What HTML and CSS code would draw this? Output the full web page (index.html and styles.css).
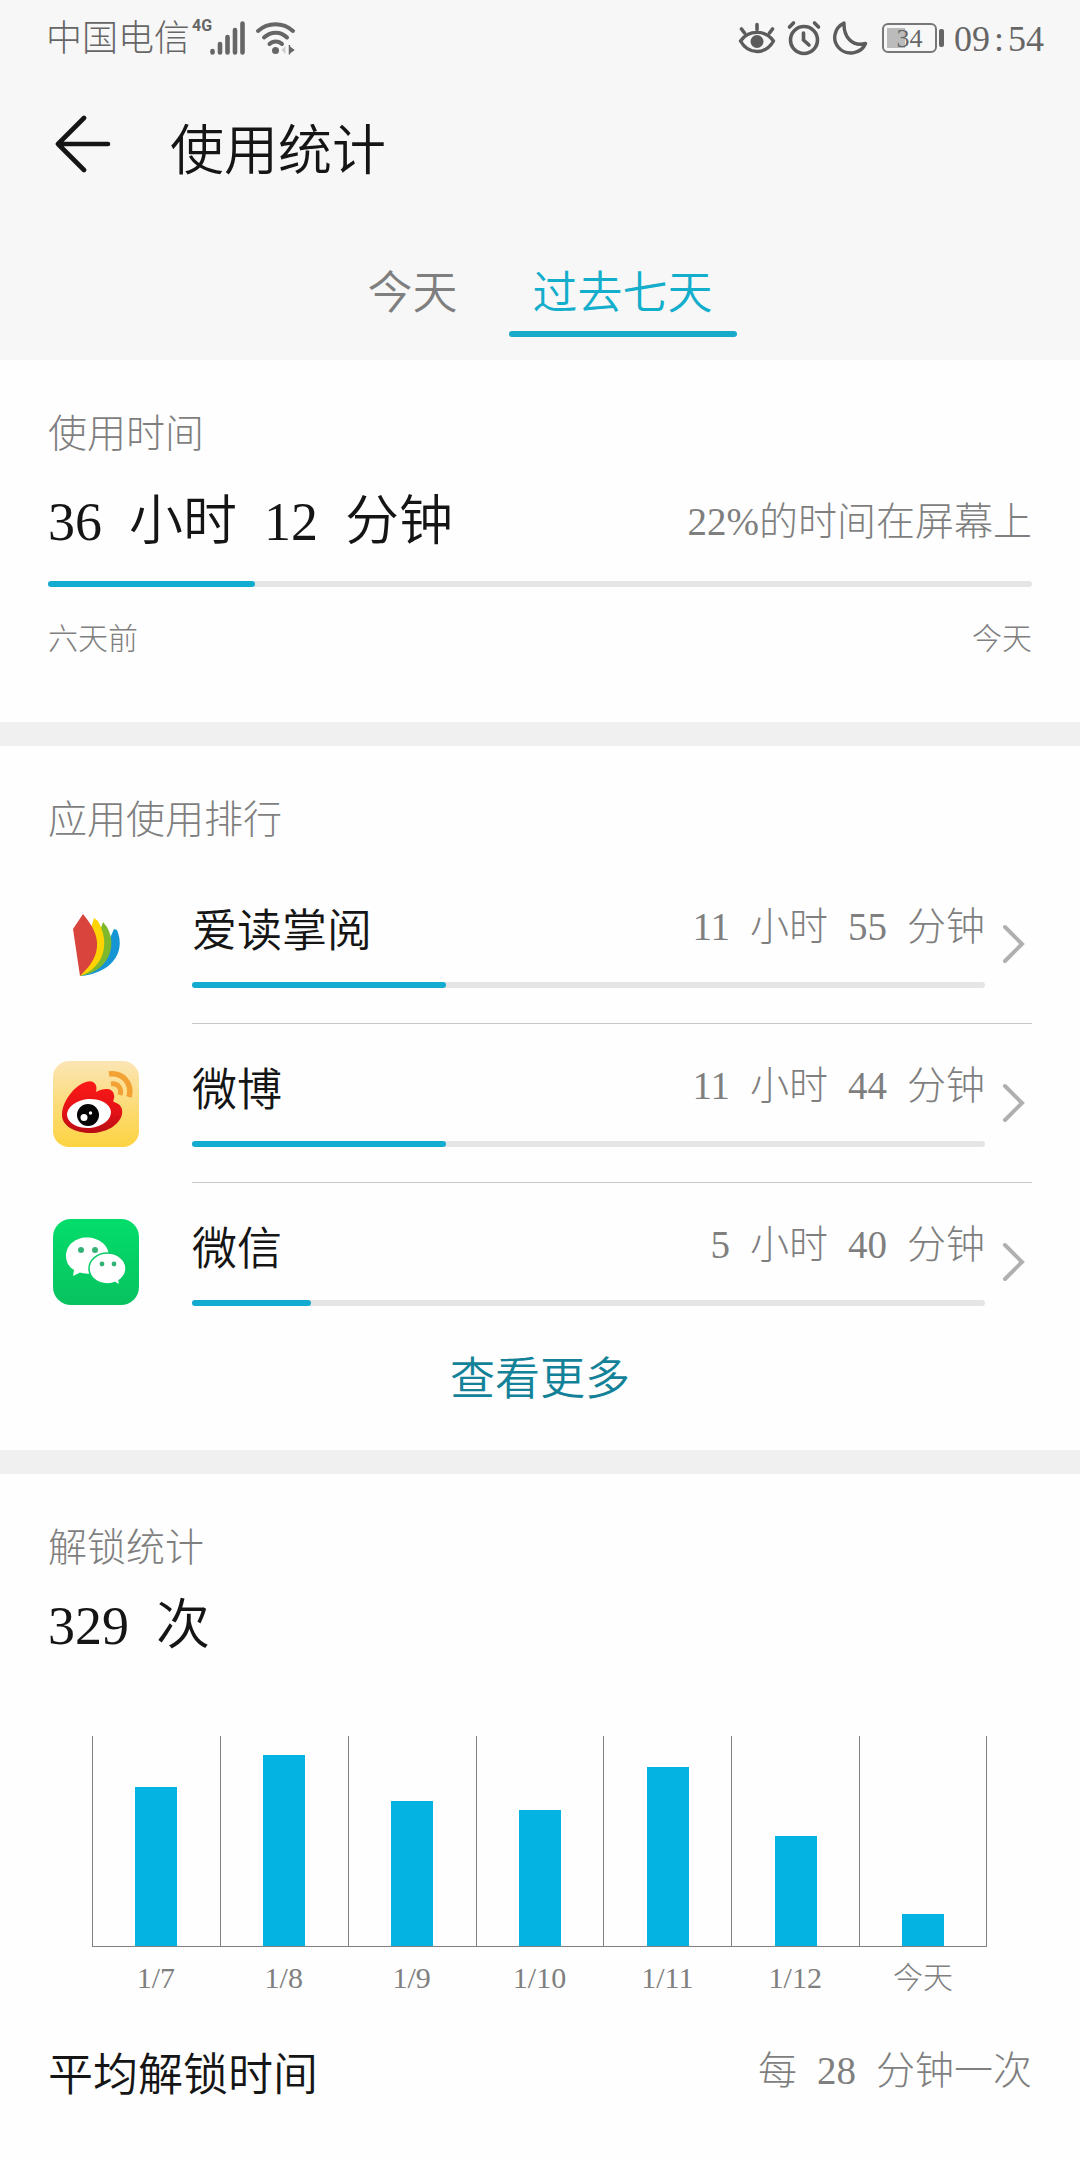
FILE: index.html
```html
<!DOCTYPE html>
<html lang="zh-CN">
<head>
<meta charset="utf-8">
<meta name="viewport" content="width=device-width, initial-scale=1">
<title>使用统计</title>
<link rel="stylesheet" href="styles.css">
</head>
<body>
<header class="top">
  <div class="status">
    <div class="status-left">
      <span class="carrier">中国电信</span>
      <span class="network">4G</span>
      <svg class="signal" width="36" height="34" viewBox="0 0 36 34" aria-hidden="true">
        <g stroke="#666" stroke-width="4.6" stroke-linecap="round"><path d="M2.5 30v1.5M10 23v8.5M17.500 16v15.500M25 9v22.500M32.500 2.500v29"/></g>
      </svg>
      <svg class="wifi" width="42" height="34" viewBox="0 0 42 34" aria-hidden="true">
        <g fill="none" stroke="#666" stroke-width="4" stroke-linecap="round"><path d="M3 10C13 1 28 1 38 10M9 16.500C16 10 25.500 10 32 16.500M14.500 23C18 19.500 23.500 19.500 27 23"/></g>
        <circle cx="20.500" cy="29.500" r="3.500" fill="#666"/>
        <path d="M34.500 24v9.500M34.500 26l4 3-4 3" fill="#666" stroke="#666" stroke-width="1.500"/>
        <path d="M30.500 25v8l-4-4z" fill="#ccc"/>
      </svg>
    </div>
    <div class="status-right">
      <svg width="38" height="34" viewBox="0 0 38 34" aria-hidden="true">
        <path d="M2.500 20C10.500 8.500 27.500 8.500 35.500 20C27.500 34 10.500 34 2.500 20Z" fill="none" stroke="#5c5c5c" stroke-width="3.400" stroke-linejoin="round"/>
        <circle cx="19" cy="20.500" r="6.500" fill="#5c5c5c"/>
        <path d="M19 3.500v5M3.500 8l3 4M34.500 8l-3 4" stroke="#5c5c5c" stroke-width="3.600" stroke-linecap="round"/>
      </svg>
      <svg width="36" height="36" viewBox="0 0 36 36" aria-hidden="true">
        <g fill="none" stroke="#5c5c5c" stroke-width="3.600" stroke-linecap="round"><circle cx="18" cy="20" r="13.500"/><path d="M17.500 13v7l5.500 5M3.500 7l4-4M32.500 7l-4-4"/></g>
      </svg>
      <svg width="36" height="36" viewBox="0 0 36 36" aria-hidden="true">
        <path d="M12 3C2 8 0 20 6.500 27.500C14 36 29 34.500 33.500 23.500C20 27 11.500 17 12 3Z" fill="none" stroke="#5c5c5c" stroke-width="3.400" stroke-linejoin="round"/>
      </svg>
      <div class="battery">
        <span class="battery-level">34</span>
        <span class="battery-cap"></span>
      </div>
      <time class="clock"><span>09</span><span class="colon">:</span><span>54</span></time>
    </div>
  </div>
  <div class="title-bar">
    <button class="back" type="button" aria-label="返回">
      <svg width="58" height="58" viewBox="0 0 58 58" aria-hidden="true"><path d="M30 3L4 29l26 26M4 29h50" fill="none" stroke="#151515" stroke-width="4.600" stroke-linecap="round" stroke-linejoin="round"/></svg>
    </button>
    <h1 class="title">使用统计</h1>
  </div>
  <div class="tabs" role="tablist">
    <button class="tab" type="button" role="tab" aria-selected="false">今天</button>
    <button class="tab" type="button" role="tab" aria-selected="true">过去七天</button>
  </div>
</header>
<main>
  <section class="card">
    <h2 class="label">使用时间</h2>
    <div class="summary">
      <p class="value"><span>36</span> <span>小时</span> <span>12</span> <span>分钟</span></p>
      <p class="note">22%的时间在屏幕上</p>
    </div>
    <div class="track"><div class="fill" style="width:21%"></div></div>
    <div class="ends"><span>六天前</span><span>今天</span></div>
  </section>

  <section class="card">
    <h2 class="label">应用使用排行</h2>
    <ul class="apps">
      <li><a class="app" href="#ireader">
        <svg class="app-icon" viewBox="0 0 86 86" aria-hidden="true">
          <path d="M61 27L64 28C74 52 56 72 27 74L50 52Z" fill="#1595d3"/>
          <path d="M50 20L54 25C65 44 55 70 27 74L40 50Z" fill="#7eb82c"/>
          <path d="M41 16L45 19C58 42 50 66 27 74L34 40Z" fill="#ffd400"/>
          <path d="M30 12C40 24 45 34 44 45C43 58 34 67 27 74L20 27Z" fill="#d9453c"/>
        </svg>
        <div class="app-body">
          <div class="app-main">
            <div class="app-head"><span class="app-name">爱读掌阅</span><span class="app-time"><span>11</span> <span>小时</span> <span>55</span> <span>分钟</span></span></div>
            <div class="track"><div class="fill" style="width:32%"></div></div>
          </div>
          <svg class="chevron" viewBox="0 0 26 42" aria-hidden="true"><path d="M4 4l17 17L4 38"/></svg>
        </div>
      </a></li>
      <li><a class="app" href="#weibo">
        <svg class="app-icon" viewBox="0 0 86 86" aria-hidden="true">
          <defs><linearGradient id="wb" x1="0" y1="0" x2="0" y2="1"><stop offset="0" stop-color="#fbe5b4"/><stop offset="1" stop-color="#fdd340"/></linearGradient>
          <linearGradient id="wr" x1="0" y1="0" x2="0" y2="1"><stop offset="0" stop-color="#fb1a16"/><stop offset=".6" stop-color="#e31117"/><stop offset="1" stop-color="#b80d14"/></linearGradient></defs>
          <rect width="86" height="86" rx="16" fill="url(#wb)"/>
          <path d="M9 54C9 40 22 24 33 21C41 18 45 24 43 31C50 27 60 26 61 34C62 38 59 40 61 41C68 43 70 48 69 53C67 64 53 72 38 72C22 72 9 65 9 54Z" fill="url(#wr)"/>
          <ellipse cx="36" cy="52.500" rx="22" ry="14.500" transform="rotate(-5 36 52.500)" fill="#fff"/>
          <circle cx="35" cy="54" r="11" fill="#050505"/>
          <circle cx="31" cy="56.500" r="3.500" fill="#fff"/><circle cx="37.500" cy="52" r="1.700" fill="#fff"/>
          <g fill="none" stroke="#f2a132"><path d="M56 13C69 11 80 22 76 36" stroke-width="5.500"/><path d="M58 23C65 22 69 27 67 34" stroke-width="5"/></g>
        </svg>
        <div class="app-body">
          <div class="app-main">
            <div class="app-head"><span class="app-name">微博</span><span class="app-time"><span>11</span> <span>小时</span> <span>44</span> <span>分钟</span></span></div>
            <div class="track"><div class="fill" style="width:32%"></div></div>
          </div>
          <svg class="chevron" viewBox="0 0 26 42" aria-hidden="true"><path d="M4 4l17 17L4 38"/></svg>
        </div>
      </a></li>
      <li><a class="app" href="#wechat">
        <svg class="app-icon" viewBox="0 0 86 86" aria-hidden="true">
          <defs><linearGradient id="wc" x1="0" y1="0" x2="0" y2="1"><stop offset="0" stop-color="#03dd6b"/><stop offset="1" stop-color="#08c25f"/></linearGradient></defs>
          <rect width="86" height="86" rx="18" fill="url(#wc)"/>
          <path d="M34 18.500C22 18.500 13 26.500 13 37C13 43 16 48 21 51L20 57L27 53.500C29.500 54.500 34 55 38 54.500C48 54 56 46 56 37C56 26.500 46 18.500 34 18.500Z" fill="#fff"/>
          <path d="M54.500 34C44 34 36 41 36 49.500C36 58 44 65 54.500 65C57 65 60 64.500 62 63.500L67 66.500L66 61.500C70.500 58.500 73 54.500 73 49.500C73 41 65 34 54.500 34Z" fill="#fff" stroke="#06cc65" stroke-width="1.500"/>
          <g fill="#35b377"><circle cx="28" cy="31" r="3"/><circle cx="42" cy="31" r="3"/><circle cx="49" cy="45" r="2.400"/><circle cx="61" cy="45" r="2.400"/></g>
        </svg>
        <div class="app-body">
          <div class="app-main">
            <div class="app-head"><span class="app-name">微信</span><span class="app-time"><span>5</span> <span>小时</span> <span>40</span> <span>分钟</span></span></div>
            <div class="track"><div class="fill" style="width:15%"></div></div>
          </div>
          <svg class="chevron" viewBox="0 0 26 42" aria-hidden="true"><path d="M4 4l17 17L4 38"/></svg>
        </div>
      </a></li>
    </ul>
    <button class="more" type="button">查看更多</button>
  </section>

  <section class="card">
    <h2 class="label">解锁统计</h2>
    <p class="value unlocks"><span>329</span> <span>次</span></p>
    <ol class="chart">
      <li class="day"><div class="plot"><div class="bar" style="height:159px"></div></div><span>1/7</span></li>
      <li class="day"><div class="plot"><div class="bar" style="height:191px"></div></div><span>1/8</span></li>
      <li class="day"><div class="plot"><div class="bar" style="height:145px"></div></div><span>1/9</span></li>
      <li class="day"><div class="plot"><div class="bar" style="height:136px"></div></div><span>1/10</span></li>
      <li class="day"><div class="plot"><div class="bar" style="height:179px"></div></div><span>1/11</span></li>
      <li class="day"><div class="plot"><div class="bar" style="height:110px"></div></div><span>1/12</span></li>
      <li class="day"><div class="plot"><div class="bar" style="height:32px"></div></div><span>今天</span></li>
    </ol>
    <div class="average">
      <span class="average-name">平均解锁时间</span>
      <span class="average-value"><span>每</span> <span>28</span> <span>分钟一次</span></span>
    </div>
  </section>
</main>
</body>
</html>
```
FILE: styles.css
```css
* {
  box-sizing: border-box;
}

body {
  margin: 0;
  background: #fefefe;
  color: #151515;
  font-family: "Liberation Serif", "Noto Sans CJK SC", serif;
  font-weight: 300;
}

h1, h2, p, ul, ol {
  margin: 0;
  padding: 0;
  font-weight: inherit;
  list-style: none;
}

button {
  margin: 0;
  padding: 0;
  border: 0;
  background: none;
  color: inherit;
  font: inherit;
}

a {
  color: inherit;
  text-decoration: none;
}

svg {
  display: block;
  flex: none;
}

.top {
  padding-bottom: 23px;
  background: #f7f7f7;
}

/* Status bar */
.status {
  display: flex;
  justify-content: space-between;
  height: 76px;
  padding: 0 36px 0 46px;
  color: #666;
  font-size: 36px;
  line-height: 76px;
}

.status-left,
.status-right {
  display: flex;
  align-items: center;
}

.carrier {
  padding-top: 2px;
}

.network {
  align-self: flex-start;
  width: 18px;
  margin: 16px 0 0 2px;
  font-family: "Liberation Sans Narrow", Roboto, sans-serif;
  font-size: 16px;
  font-weight: 700;
  line-height: 20px;
}

.wifi {
  margin-left: 9px;
}

.status-right {
  gap: 10px;
}

.battery {
  display: flex;
  align-items: center;
  gap: 2px;
  margin-left: 4px;
}

.battery-level {
  width: 55px;
  height: 30px;
  border: 2px solid #777;
  border-radius: 6px;
  background: linear-gradient(#bbb, #bbb) 3px 3px / 18px 20px no-repeat;
  font-size: 26px;
  line-height: 28px;
  text-align: center;
}

.battery-cap {
  width: 5px;
  height: 18px;
  border-radius: 2px;
  background: #666;
}

.clock {
  display: flex;
  padding-top: 2px;
}

.colon {
  padding: 0 4px;
}

/* Title and tabs */
.title-bar {
  display: flex;
  align-items: center;
  gap: 58px;
  height: 144px;
  padding: 0 54px;
}

.back {
  padding-bottom: 8px;
}

.title {
  padding-top: 8px;
  font-size: 54px;
  line-height: 64px;
}

.title,
.value,
.app-name,
.average-name,
.more,
.tab {
  font-weight: 350;
}

.tabs {
  display: flex;
  justify-content: center;
  gap: 27px;
  padding-top: 49px;
}

.tab {
  padding: 0 24px 12px;
  border-bottom: 6px solid transparent;
  color: #7f7f7f;
  font-size: 45px;
  line-height: 50px;
}

.tab[aria-selected="true"] {
  position: relative;
  color: #12aecb;
}

.tab[aria-selected="true"]::after {
  content: "";
  position: absolute;
  right: 0;
  bottom: -6px;
  left: 0;
  height: 6px;
  border-radius: 3px;
  background: #19aaca;
}

/* Sections */
.card {
  padding: 49px 48px 0;
}

.card + .card {
  border-top: 24px solid #f0f0f0;
}

.label {
  color: #7f7f7f;
  font-size: 39px;
  line-height: 50px;
}

.value {
  display: flex;
  gap: 27px;
  font-size: 54px;
  line-height: 64px;
}

.summary {
  display: flex;
  justify-content: space-between;
  align-items: center;
  padding: 31px 0 27px;
}

.note,
.app-time,
.average-value {
  color: #7f7f7f;
  font-size: 39px;
  line-height: 50px;
}

.track {
  height: 6px;
  border-radius: 3px;
  background: #e5e5e5;
}

.fill {
  height: 100%;
  border-radius: 3px;
  background: #14abd1;
}

.ends {
  display: flex;
  justify-content: space-between;
  padding: 32px 0 63px;
  color: #7f7f7f;
  font-size: 30px;
  line-height: 40px;
}

/* App ranking */
.apps {
  padding-top: 20px;
}

.app {
  display: flex;
  align-items: center;
  gap: 53px;
  padding-left: 5px;
}

.app-icon {
  width: 86px;
  height: 86px;
}

.app-body {
  display: flex;
  flex: 1;
  align-items: center;
  gap: 16px;
  padding: 35px 0;
}

.apps li:not(:last-child) .app-body {
  border-bottom: 1px solid #c4c7c8;
}

.app-main {
  flex: 1;
}

.app-head {
  display: flex;
  justify-content: space-between;
  align-items: flex-start;
  padding: 2px 0 20px;
}

.app-name,
.average-name {
  font-size: 45px;
  line-height: 60px;
}

.app-time,
.average-value {
  display: flex;
  gap: 20px;
}

.chevron {
  width: 26px;
  height: 42px;
  margin-right: 5px;
  fill: none;
  stroke: #b0b0b0;
  stroke-width: 4;
  stroke-linecap: round;
}

.more {
  display: block;
  margin: 9px auto 40px;
  color: #138299;
  font-size: 45px;
  line-height: 60px;
}

/* Unlock chart */
.unlocks {
  padding: 21px 0 78px;
  box-sizing: content-box;
}

.chart {
  display: flex;
  margin: 0 45px 0 44px;
}

.day {
  flex: 1;
  color: #7f7f7f;
  font-size: 30px;
  line-height: 40px;
  text-align: center;
}

.plot {
  display: flex;
  justify-content: center;
  align-items: flex-end;
  height: 211px;
  margin-bottom: 11px;
  border-bottom: 1px solid #808080;
  border-left: 1px solid #808080;
}

.day:last-child .plot {
  border-right: 1px solid #808080;
}

.bar {
  width: 42px;
  background: #04b3e1;
}

.average {
  display: flex;
  justify-content: space-between;
  align-items: flex-start;
  padding: 48px 0 54px;
}
```
